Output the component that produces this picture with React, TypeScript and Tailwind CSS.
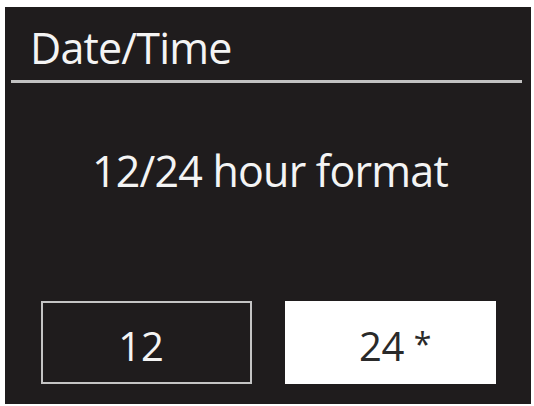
import React from 'react';

const App: React.FC = () => {
  const font = { fontFamily: '"Open Sans", "Noto Sans", sans-serif' };

  return (
    <div className="w-[534px] h-[406px] bg-white pt-[7px] pl-[5px] overflow-hidden" style={font}>
      <div className="w-[526px] h-[397px] bg-[#1f1c1d] flex flex-col">
        {/* Header */}
        <div className="pt-[19px] pl-[25px] text-[43px] tracking-[-0.8px] leading-none text-[#f4f4f4]">Date/Time</div>
        <div className="mt-[11px] ml-[6px] mr-[9px] h-[3px] bg-[#c2c2c2]" />

        {/* Question */}
        <div className="mt-[66px] pl-[4px] text-center text-[43px] tracking-[-0.8px] leading-none text-[#f4f4f4]">
          12/24 hour format
        </div>

        {/* Options */}
        <div className="mt-[109px] flex justify-center gap-[33px]">
          <div className="w-[211px] h-[83px] border-2 border-[#c4c4c4] pt-[23px] pr-[10px] text-center text-[40px] leading-none text-[#f4f4f4]">
            12
          </div>
          <div className="w-[211px] h-[83px] border-2 border-white bg-white pt-[23px] pl-[10px] text-center text-[40px] tracking-[-0.5px] leading-none text-[#2a2a2a]">
            24 <span className="text-[32px] align-[5px]">*</span>
          </div>
        </div>
      </div>
    </div>
  );
};

export default App;
